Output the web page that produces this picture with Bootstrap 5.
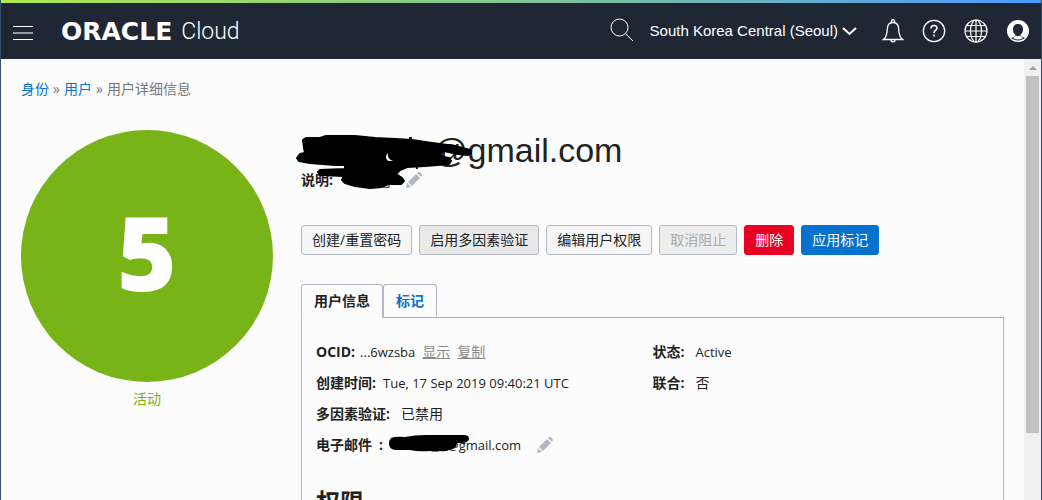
<!DOCTYPE html>
<html lang="zh-CN">
<head>
<meta charset="utf-8">
<meta name="viewport" content="width=device-width, initial-scale=1">
<title>Oracle Cloud</title>
<link href="https://cdn.jsdelivr.net/npm/bootstrap@5.3.0/dist/css/bootstrap.min.css" rel="stylesheet">
<style>
body{font-family:"Open Sans","Noto Sans CJK SC",sans-serif;font-size:14px;line-height:21px;color:#222;background:#fcfcfc;border-left:1px solid #34506a;border-right:1px solid #3b4a5c}
a{color:#0572ce;text-decoration:none}
.rainbow{height:3px;background:linear-gradient(90deg,#aee84f,#79bca6 60%,#4c9aff)}
.topbar{height:56px;background:#1e2733;color:#fff;padding:0 11px 0 12px}
.topbar .btn{color:#fff;line-height:0}
.brand-link{gap:9px;padding-top:2px}
.brand-name{font:bold 25px/28px "DejaVu Sans",sans-serif;color:#fff}
.brand-product{font:300 23px/28px Roboto,sans-serif;color:#fff}
.topbar .region{font:15px/22px "Liberation Sans",sans-serif}
.tools{gap:18px}
.main-area{padding:19px 20px 0}
.crumbs{color:#777;margin-bottom:31px}
.avatar-col{width:252px}
.avatar{width:252px;height:252px;background:#78b417;color:#fff;font-weight:800;font-size:102px;line-height:1;padding-bottom:8px}
.status-label{color:#78b417;margin-top:6px}
.columns{gap:28px}
.title{font:34px/40px "Liberation Sans",sans-serif;padding-left:132px}
.desc-row{line-height:20px}
.hidden-name{width:46px}
.scribble{left:-6px;top:4px;pointer-events:none}
.actions{gap:7px;margin-top:35px;margin-bottom:29px}
.actions .btn{font-size:14px;line-height:20px;padding:4px 10px;border-radius:3px;border-color:#b3b8c4;background:#f5f5f5;color:#222}
.actions .btn.shade{background:#e9e9e9}
.actions .btn:disabled{background:#ededed;color:#aaa;opacity:1}
.actions .btn.del{background:#e90022;border-color:#e90022;color:#fff}
.actions .btn.tag{background:#0572ce;border-color:#0572ce;color:#fff}
.nav-tabs{border-bottom-color:#aaadb3}
.nav-tabs .nav-link{padding:5px 12px 6px;border:1px solid #b3b8c4;border-radius:3px 3px 0 0;font-weight:700;color:#0572ce;background:#fcfcfc;border-bottom-color:#aaadb3}
.nav-tabs .nav-link.active{color:#222;background:#fcfcfc;border-color:#b3b8c4 #b3b8c4 #fcfcfc}
.panel{border:1px solid #b3b8c4;border-top:0;padding:24px 14px 60px}
.facts{gap:11px}
.facts dt{font-weight:700}
.facts .fact{gap:7px;height:20px;line-height:20px}
.facts .wide{gap:11px}
.facts .ocid{gap:5px}
.latin{font-size:13px}
.facts a{color:#888;text-decoration:underline}
.mail-mask{left:-2px;top:0}
.mail-text{padding-left:57px}
.section-head{font-size:24px;line-height:30px;font-weight:700;margin-top:32px}
.icon-btn{line-height:0;background:none;border:0;padding:0}
.track{width:17px;background:#f0f0f0;padding:0 2px}
.track .arrow{height:17px;padding-top:7px}
.track .thumb{height:81%;background:#c1c1c1}
</style>
</head>
<body class="vh-100 d-flex flex-column overflow-hidden">
<div class="rainbow flex-shrink-0"></div>
<header class="topbar d-flex align-items-center flex-shrink-0">
  <button class="btn p-0 border-0 pt-1" aria-label="Menu"><svg width="20" height="16" shape-rendering="crispEdges"><path d="M0 1.500h20M0 14.500h20" stroke="#fff"/><path d="M0 8h20" stroke="#949a9f" stroke-width="2"/></svg></button>
  <a href="#" class="brand-link d-flex align-items-center ms-4 ps-1"><span class="brand-name">ORACLE</span><span class="brand-product">Cloud</span></a>
  <div class="d-flex align-items-center ms-auto">
    <button class="btn p-0 border-0 me-3" aria-label="Search"><svg width="24" height="26" fill="none" stroke="#fff"><circle cx="9.500" cy="9.500" r="8.500"/><path d="M15.500 15.500L23 23"/></svg></button>
    <button class="btn p-0 border-0 d-flex align-items-center gap-1 region">South Korea Central (Seoul)<svg width="16" height="12" fill="none" stroke="#fff" stroke-width="2"><path d="M1 3l6.500 6L14 3"/></svg></button>
    <div class="tools d-flex ms-4">
      <button class="btn p-0 border-0" aria-label="Notifications"><svg width="22" height="24" fill="none" stroke="#fff" stroke-width="1.300"><path d="M1.500 20.500c2-1.500 3-4 3.500-7l.5-5c.4-3 2.500-5 5.500-5s5 2 5.500 5l.5 5c.5 3 1.500 5.500 3.500 7zM9.500 3.500V2a1.500 1.500 0 013 0v1.500M9 21c0 2.500 4 2.500 4 0"/></svg></button>
      <button class="btn p-0 border-0" aria-label="Help"><svg width="24" height="24" fill="none" stroke="#fff"><circle cx="12" cy="12" r="10.700" stroke-width="1.300"/><path d="M9 9.500c0-4 6-4 6-.5 0 2.500-3 2-3 5M12 15.500v2" stroke-width="1.600"/></svg></button>
      <button class="btn p-0 border-0" aria-label="Language"><svg width="24" height="24" fill="none" stroke="#fff" stroke-width="1.200"><circle cx="12" cy="12" r="11"/><ellipse cx="12" cy="12" rx="5.500" ry="11"/><path d="M12 1v22M1 12h22M3 6.500h18M3 17.500h18"/></svg></button>
      <button class="btn p-0 border-0" aria-label="Profile"><svg width="24" height="24"><circle cx="12" cy="12" r="11" fill="#fff"/><path d="M12 5c-3.300 0-5 2-5 5 0 2.700 1 4.700 2.500 5.700L8.500 17.500 5 19c4 3.300 10 3.300 14 0l-3.500-1.500-1-1.800c1.500-1 2.500-3 2.500-5.700 0-3-1.700-5-5-5z" fill="#1e2733"/><path d="M9.800 16.500q2.200 1.300 4.400 0l2.800 2.500q-5 3-10 0z" fill="#fff"/></svg></button>
    </div>
  </div>
</header>
<div class="d-flex flex-grow-1 overflow-hidden">
  <main class="main-area flex-grow-1">
    <nav class="crumbs d-flex gap-1" aria-label="breadcrumb"><a href="#">身份</a><span>»</span><a href="#">用户</a><span>»</span><span>用户详细信息</span></nav>
    <div class="columns d-flex">
      <aside class="avatar-col flex-shrink-0 text-center">
        <div class="avatar rounded-circle d-flex align-items-center justify-content-center">5</div>
        <div class="status-label">活动</div>
      </aside>
      <section class="flex-grow-1">
        <div class="position-relative">
          <h1 class="title m-0">@gmail.com</h1>
          <div class="desc-row d-flex"><b>说明:</b><span class="hidden-name"></span><span class="latin ps-1">g</span>
            <button class="icon-btn ms-3" aria-label="编辑说明"><svg width="16" height="16" fill="#b0b7c1"><path d="M0 16l1-5 4 4zM2 10l8-8 4 4-8 8zM11 1l1-1q1-.5 2 .5l1.500 1.500q.8 1 0 2l-.8.700z"/></svg></button>
          </div>
          <svg class="scribble position-absolute" width="180" height="58" viewBox="295 134 180 58">
            <path d="M409 137h3v5h-3zM416 165h2v4h-2z" fill="#222"/>
            <path d="M303 140L306 138 320 138 326 136H355L375 138 395 139 412 140 432 143 455 146 470 150 471 153 468 155 458 154 444 151 440 154 443 157 449 158 451 161 449 164 425 166 407 167 400 170 396 174 402 178 404 181 401 184 388 184 382 187 370 188 355 186 345 183 342 180 344 176 320 175 318 172 320 170 345 169V165L335 165 310 163 299 161 297 158 300 154 305 153 304 148z" fill="#000" stroke="#000" stroke-width="2" stroke-linejoin="round"/>
            <path d="M388 153q-4 4 0 8h5q-6-2-5-8z" fill="#fcfcfc"/>
          </svg>
        </div>
        <div class="actions d-flex flex-wrap">
          <button class="btn">创建/重置密码</button>
          <button class="btn shade">启用多因素验证</button>
          <button class="btn">编辑用户权限</button>
          <button class="btn" disabled>取消阻止</button>
          <button class="btn del">删除</button>
          <button class="btn tag">应用标记</button>
        </div>
        <ul class="nav nav-tabs">
          <li class="nav-item"><a class="nav-link active" href="#">用户信息</a></li>
          <li class="nav-item"><a class="nav-link" href="#">标记</a></li>
        </ul>
        <div class="panel">
          <div class="row g-0">
            <dl class="facts col-6 d-flex flex-column m-0">
              <div class="fact ocid d-flex"><dt>OCID:</dt><dd class="m-0"><span class="latin">...6wzsba</span>&ensp;<a href="#">显示</a>&ensp;<a href="#">复制</a></dd></div>
              <div class="fact d-flex"><dt>创建时间:</dt><dd class="m-0 latin">Tue, 17 Sep 2019 09:40:21 UTC</dd></div>
              <div class="fact wide d-flex"><dt>多因素验证:</dt><dd class="m-0">已禁用</dd></div>
              <div class="fact d-flex"><dt>电子邮件&ensp;:</dt><dd class="m-0 latin position-relative d-flex"><span class="mail-text">@gmail.com</span>
                <svg class="mail-mask position-absolute" width="84" height="20"><path d="M3 3q4-2 14-1 9-2 21-2h38q5 0 5 4-1 4-7 4h-5q0 6-8 7-4 2-9 1-5 1-10 0-12 1-20-1H7q-6-1-6-6 0-4 2-6z"/></svg>
                <button class="icon-btn ms-3" aria-label="编辑电子邮件"><svg width="16" height="16" fill="#b0b7c1"><path d="M0 16l1-5 4 4zM2 10l8-8 4 4-8 8zM11 1l1-1q1-.5 2 .5l1.500 1.500q.8 1 0 2l-.8.700z"/></svg></button></dd></div>
            </dl>
            <dl class="facts col-6 d-flex flex-column m-0">
              <div class="fact wide d-flex"><dt>状态:</dt><dd class="m-0 latin">Active</dd></div>
              <div class="fact wide d-flex"><dt>联合:</dt><dd class="m-0">否</dd></div>
            </dl>
          </div>
          <h2 class="section-head mb-0">权限</h2>
        </div>
      </section>
    </div>
  </main>
  <div class="track flex-shrink-0" aria-hidden="true">
    <div class="arrow d-flex justify-content-center"><svg width="8" height="4"><path d="M0 4l4-4 4 4z" fill="#a0a0a0"/></svg></div>
    <div class="thumb"></div>
  </div>
</div>
<script src="https://cdn.jsdelivr.net/npm/bootstrap@5.3.0/dist/js/bootstrap.bundle.min.js"></script>
</body>
</html>
